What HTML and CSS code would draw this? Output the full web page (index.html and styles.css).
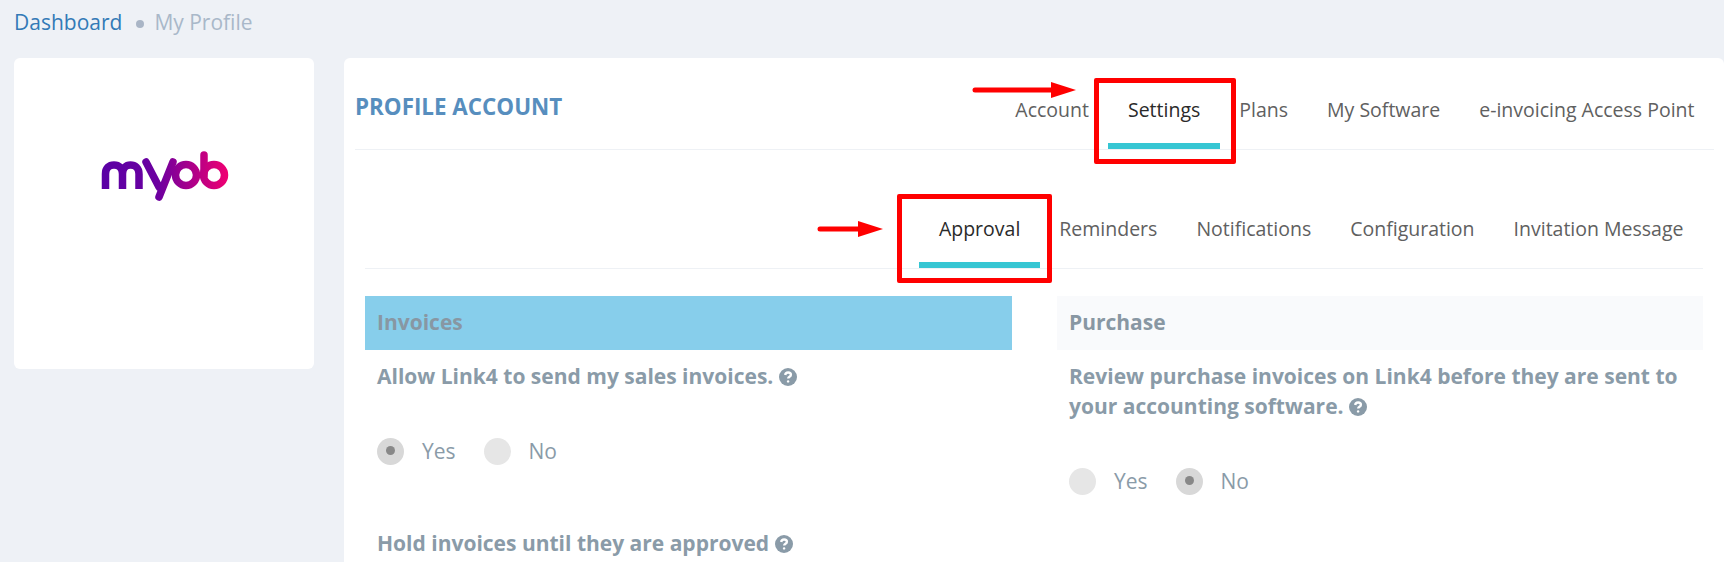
FILE: index.html
```html
<!DOCTYPE html>
<html lang="en">
<head>
<meta charset="UTF-8">
<meta name="viewport" content="width=device-width, initial-scale=1.0">
<title>My Profile</title>
<link rel="stylesheet" href="styles.css">
</head>
<body>

  <div class="breadcrumb">
    <a href="#">Dashboard</a>
    <span class="dot"></span>
    <span class="current">My Profile</span>
  </div>

  <div class="page">
    <!-- Company logo -->
    <div class="logo-card">
      <svg class="logo" viewBox="0 0 130 56" width="130" height="56">
        <defs>
          <linearGradient id="myobGrad" gradientUnits="userSpaceOnUse" x1="2" y1="0" x2="128" y2="0">
            <stop offset="0" stop-color="#5a00a5"/>
            <stop offset="0.45" stop-color="#6c00a0"/>
            <stop offset="1" stop-color="#ee0072"/>
          </linearGradient>
        </defs>
        <g fill="none" stroke="url(#myobGrad)" stroke-width="7.500">
          <path d="M6.500 41V26c0-6 3.500-9 8.500-9s8.500 3 8.500 9v15M23.500 26c0-6 3.500-9 8-9s8.500 3 8.500 9v15"/>
          <path d="M47 14l13 25M74 14L60 49" stroke-linecap="round"/>
          <circle cx="87" cy="27" r="10.500"/>
          <path d="M105 7V27" stroke-linecap="round"/>
          <circle cx="115" cy="27" r="10.500"/>
        </g>
      </svg>
    </div>

    <div class="profile-card">
      <div class="card-head">
        <div class="card-title">PROFILE ACCOUNT</div>
        <ul class="tabs">
          <li><a href="#">Account</a></li>
          <li class="active"><a href="#">Settings</a></li>
          <li><a href="#">Plans</a></li>
          <li><a href="#">My Software</a></li>
          <li><a href="#">e-invoicing Access Point</a></li>
        </ul>
      </div>

      <div class="settings">
        <ul class="tabs sub-tabs">
          <li class="active"><a href="#">Approval</a></li>
          <li><a href="#">Reminders</a></li>
          <li><a href="#">Notifications</a></li>
          <li><a href="#">Configuration</a></li>
          <li><a href="#">Invitation Message</a></li>
        </ul>

        <div class="columns">
          <div class="column">
            <h3 class="section-title highlighted">Invoices</h3>
            <p class="question">Allow Link4 to send my sales invoices.
              <svg class="help" viewBox="0 0 18 18" width="18" height="18"><circle cx="9" cy="9" r="9"/><path d="M6.200 7c.2-1.700 1.400-2.500 2.900-2.500 1.600 0 2.800.9 2.800 2.300 0 2.100-2.700 2-2.700 3.800"/><circle class="help-dot" cx="9.100" cy="13.400" r="1.200"/></svg>
            </p>
            <div class="radios">
              <label class="radio checked"><span class="radio-mark"></span>Yes</label>
              <label class="radio"><span class="radio-mark"></span>No</label>
            </div>
            <p class="question">Hold invoices until they are approved
              <svg class="help" viewBox="0 0 18 18" width="18" height="18"><circle cx="9" cy="9" r="9"/><path d="M6.200 7c.2-1.700 1.400-2.500 2.900-2.500 1.600 0 2.800.9 2.800 2.300 0 2.100-2.700 2-2.700 3.800"/><circle class="help-dot" cx="9.100" cy="13.400" r="1.200"/></svg>
            </p>
          </div>

          <div class="column">
            <h3 class="section-title">Purchase</h3>
            <p class="question">Review purchase invoices on Link4 before they are sent to your accounting software.
              <svg class="help" viewBox="0 0 18 18" width="18" height="18"><circle cx="9" cy="9" r="9"/><path d="M6.200 7c.2-1.700 1.400-2.500 2.900-2.500 1.600 0 2.800.9 2.800 2.300 0 2.100-2.700 2-2.700 3.800"/><circle class="help-dot" cx="9.100" cy="13.400" r="1.200"/></svg>
            </p>
            <div class="radios">
              <label class="radio"><span class="radio-mark"></span>Yes</label>
              <label class="radio checked"><span class="radio-mark"></span>No</label>
            </div>
          </div>
        </div>
      </div>
    </div>
  </div>

  <!-- Annotations on top of the screenshot -->
  <div class="mark mark-settings"></div>
  <div class="mark mark-approval"></div>
  <svg class="arrow arrow-settings" viewBox="0 0 104 16" width="104" height="16"><path d="M79 0l25 8-25 8z" fill="#f00"/><path d="M3 8H80" stroke="#f00" stroke-width="5" stroke-linecap="round"/></svg>
  <svg class="arrow arrow-approval" viewBox="0 0 66 16" width="66" height="16"><path d="M3 8H42" stroke="#f00" stroke-width="5" stroke-linecap="round"/><path d="M41 0l25 8-25 8z" fill="#f00"/></svg>

</body>
</html>
```

FILE: styles.css
```css
* {
  box-sizing: border-box;
}

body {
  margin: 0;
  height: 562px;
  overflow: hidden;
  background-color: #eef1f6;
  font-family: "Open Sans", sans-serif;
  position: relative;
}

/* Breadcrumb */
.breadcrumb {
  display: flex;
  align-items: center;
  height: 43px;
  margin-bottom: 1px;
  padding-left: 14px;
  font-size: 21px;
}

.breadcrumb a {
  color: #337ab7;
  text-decoration: none;
}

.breadcrumb .dot {
  width: 8px;
  height: 8px;
  margin: 5px 10px 0 14px;
  border-radius: 50%;
  background-color: #a9b5c6;
}

.breadcrumb .current {
  color: #a9b8c9;
}

/* Page columns */
.page {
  display: flex;
  gap: 30px;
  align-items: flex-start;
  padding: 14px 0 0 14px;
}

.logo-card {
  flex: 0 0 300px;
  height: 311px;
  display: flex;
  justify-content: center;
  padding-top: 90px;
  background-color: #fff;
  border-radius: 6px;
}

.logo {
  display: block;
}

.profile-card {
  flex: 1;
  height: 520px;
  padding: 0 10px 0 11px;
  background-color: #fff;
  border-radius: 6px 6px 0 0;
}

/* Tabs */
.card-head {
  display: flex;
  justify-content: space-between;
  height: 92px;
  border-bottom: 1px solid #eef1f5;
}

.card-title {
  padding-top: 34px;
  font-size: 22.400px;
  line-height: 30px;
  font-weight: 700;
  color: #578ebe;
}

.tabs {
  display: flex;
  margin: 0;
  padding: 0;
  list-style: none;
}

.tabs a {
  display: block;
  height: 91px;
  padding: 39px 19.500px 0;
  font-size: 19.500px;
  line-height: 26px;
  color: #606060;
  text-decoration: none;
}

.tabs .active a {
  color: #2a2a2a;
  border-bottom: 6px solid #36c6d3;
}

.settings {
  padding: 0 11px 0 10px;
}

.sub-tabs {
  justify-content: flex-end;
  height: 119px;
  border-bottom: 1px solid #eef1f5;
}

.sub-tabs a {
  height: 118px;
  padding-top: 66px;
}

/* Approval settings */
.columns {
  display: grid;
  grid-template-columns: 647px 646px;
  gap: 45px;
  margin-top: 27px;
}

.section-title {
  margin: 0;
  height: 54px;
  padding: 0 12px;
  font-size: 21px;
  line-height: 52px;
  font-weight: 700;
  color: #8897a3;
  background-color: #f9fafc;
}

.section-title.highlighted {
  background-color: #87ceeb;
}

.question {
  margin: 11px 12px 0;
  font-size: 21px;
  line-height: 30px;
  font-weight: 700;
  color: #8a9ba8;
}

.help {
  vertical-align: -2px;
}

.help circle {
  fill: #8a9ba8;
}

.help path {
  fill: none;
  stroke: #fff;
  stroke-width: 2.400;
}

.help .help-dot {
  fill: #fff;
}

.radios {
  display: flex;
  gap: 28px;
  margin: 46px 12px 63px;
}

.radio {
  display: flex;
  align-items: center;
  font-size: 21px;
  line-height: 28px;
  color: #8a9ba8;
}

.radio-mark {
  position: relative;
  width: 27px;
  height: 27px;
  margin-right: 18px;
  border-radius: 50%;
  background-color: #e6e6e6;
}

.radio.checked .radio-mark {
  background-color: #d8d8d8;
}

.radio.checked .radio-mark::after {
  content: "";
  position: absolute;
  left: 9px;
  top: 8px;
  width: 9px;
  height: 9px;
  border-radius: 50%;
  background-color: #888;
}

/* Red annotation boxes and arrows */
.mark {
  position: absolute;
  border: 5px solid #f00;
  border-radius: 2px;
}

.mark-settings {
  left: 1094px;
  top: 78px;
  width: 142px;
  height: 86px;
}

.mark-approval {
  left: 897px;
  top: 194px;
  width: 155px;
  height: 89px;
}

.arrow {
  position: absolute;
}

.arrow-settings {
  left: 972px;
  top: 82px;
}

.arrow-approval {
  left: 817px;
  top: 221px;
}
```
